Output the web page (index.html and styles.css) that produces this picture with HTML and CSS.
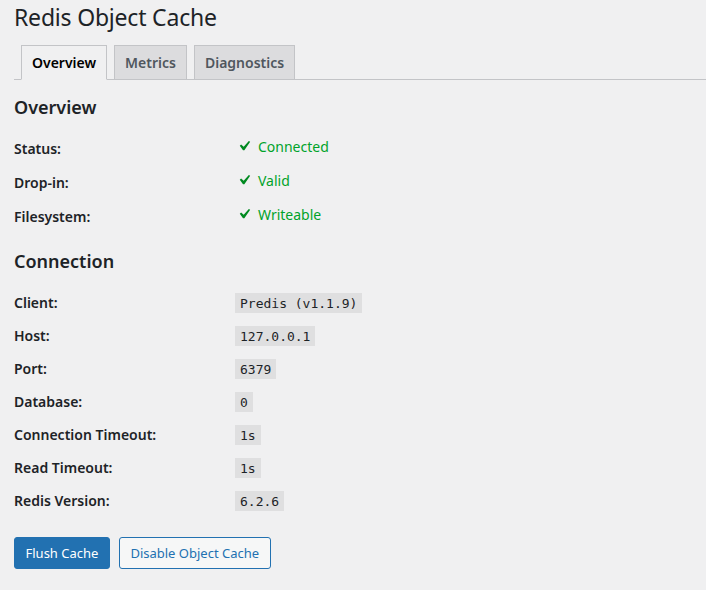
FILE: index.html
```html
<!DOCTYPE html>
<html>
<head>
<meta charset="utf-8">
<link rel="stylesheet" href="styles.css">
</head>
<body>
<div class="wrap">
  <h1 class="title">Redis Object Cache</h1>
  <nav class="tabs">
    <a class="tab active">Overview</a>
    <a class="tab">Metrics</a>
    <a class="tab">Diagnostics</a>
  </nav>

  <h2 class="section first">Overview</h2>
  <table class="form">
    <tr><th>Status:</th><td><span class="ok"><svg class="chk" viewBox="0 0 20 20"><path d="M14.83 4.89l1.34.94-5.81 8.38H9.02L5.78 9.67l1.34-1.25 2.57 2.4z"/></svg>Connected</span></td></tr>
    <tr><th>Drop-in:</th><td><span class="ok"><svg class="chk" viewBox="0 0 20 20"><path d="M14.83 4.89l1.34.94-5.81 8.38H9.02L5.78 9.67l1.34-1.25 2.57 2.4z"/></svg>Valid</span></td></tr>
    <tr><th>Filesystem:</th><td><span class="ok"><svg class="chk" viewBox="0 0 20 20"><path d="M14.83 4.89l1.34.94-5.81 8.38H9.02L5.78 9.67l1.34-1.25 2.57 2.4z"/></svg>Writeable</span></td></tr>
  </table>

  <h2 class="section second">Connection</h2>
  <table class="form conn">
    <tr><th>Client:</th><td><code>Predis (v1.1.9)</code></td></tr>
    <tr><th>Host:</th><td><code>127.0.0.1</code></td></tr>
    <tr><th>Port:</th><td><code>6379</code></td></tr>
    <tr><th>Database:</th><td><code>0</code></td></tr>
    <tr><th>Connection Timeout:</th><td><code>1s</code></td></tr>
    <tr><th>Read Timeout:</th><td><code>1s</code></td></tr>
    <tr><th>Redis Version:</th><td><code>6.2.6</code></td></tr>
  </table>

  <div class="actions">
    <a class="btn primary">Flush Cache</a>
    <a class="btn secondary">Disable Object Cache</a>
  </div>
</div>
</body>
</html>
```
FILE: styles.css
```css
html, body {
  margin: 0;
  padding: 0;
  background: #f0f0f1;
}
body {
  font-family: "Noto Sans", "Open Sans", sans-serif;
  font-size: 14px;
  color: #1d2327;
}
.wrap {
  padding-left: 14px;
}
.title {
  margin: 0;
  height: 45px;
  box-sizing: border-box;
  padding-top: 2px;
  font-size: 23px;
  font-weight: 400;
  line-height: 30px;
  letter-spacing: -0.2px;
  color: #1d2327;
}
.tabs {
  display: flex;
  border-bottom: 1px solid #c3c4c7;
  height: 35px;
  box-sizing: border-box;
  align-items: flex-end;
}
.tab {
  display: block;
  margin-left: 7px;
  margin-bottom: -1px;
  padding: 5px 10px;
  height: 35px;
  box-sizing: border-box;
  border: 1px solid #c3c4c7;
  background: #dcdcde;
  color: #50575e;
  font-size: 14px;
  font-weight: 600;
  line-height: 23px;
  white-space: nowrap;
}
.tab.active {
  background: #f0f0f1;
  border-bottom-color: #f0f0f1;
  color: #000;
}
.section {
  margin: 15px 0 12px;
  font-size: 18px;
  font-weight: 600;
  line-height: 24px;
  color: #1d2327;
}
.section.second {
  margin-top: 0;
  margin-bottom: 13px;
}
.form {
  border-collapse: collapse;
  margin: 0 0 16px;
}
.form th {
  width: 221px;
  height: 34px;
  padding: 0;
  text-align: left;
  font-weight: 600;
  font-size: 14px;
  vertical-align: middle;
}
.form td {
  padding: 0;
  height: 34px;
  vertical-align: middle;
}
.form.conn th, .form.conn td { height: 33px; }
.form.conn { margin-bottom: 20px; }
.ok {
  display: inline-flex;
  align-items: center;
  color: #00a32a;
}
.chk {
  width: 20px;
  height: 20px;
  fill: #008a20;
  margin-left: -1px;
  margin-right: 4px;
}
code {
  display: inline-block;
  font-family: "DejaVu Sans Mono", monospace;
  font-size: 13px;
  line-height: 15px;
  padding: 3px 5px 2px;
  background: rgba(0,0,0,0.07);
  color: #1d2327;
}
.actions {
  display: flex;
  gap: 9px;
}
.btn {
  display: block;
  height: 32px;
  box-sizing: border-box;
  padding: 0 10.5px;
  border: 1px solid #2271b1;
  border-radius: 3px;
  font-size: 13px;
  line-height: 30px;
  white-space: nowrap;
}
.btn.primary {
  background: #2271b1;
  color: #fff;
}
.btn.secondary {
  background: #f6f7f7;
  color: #2271b1;
}
```
